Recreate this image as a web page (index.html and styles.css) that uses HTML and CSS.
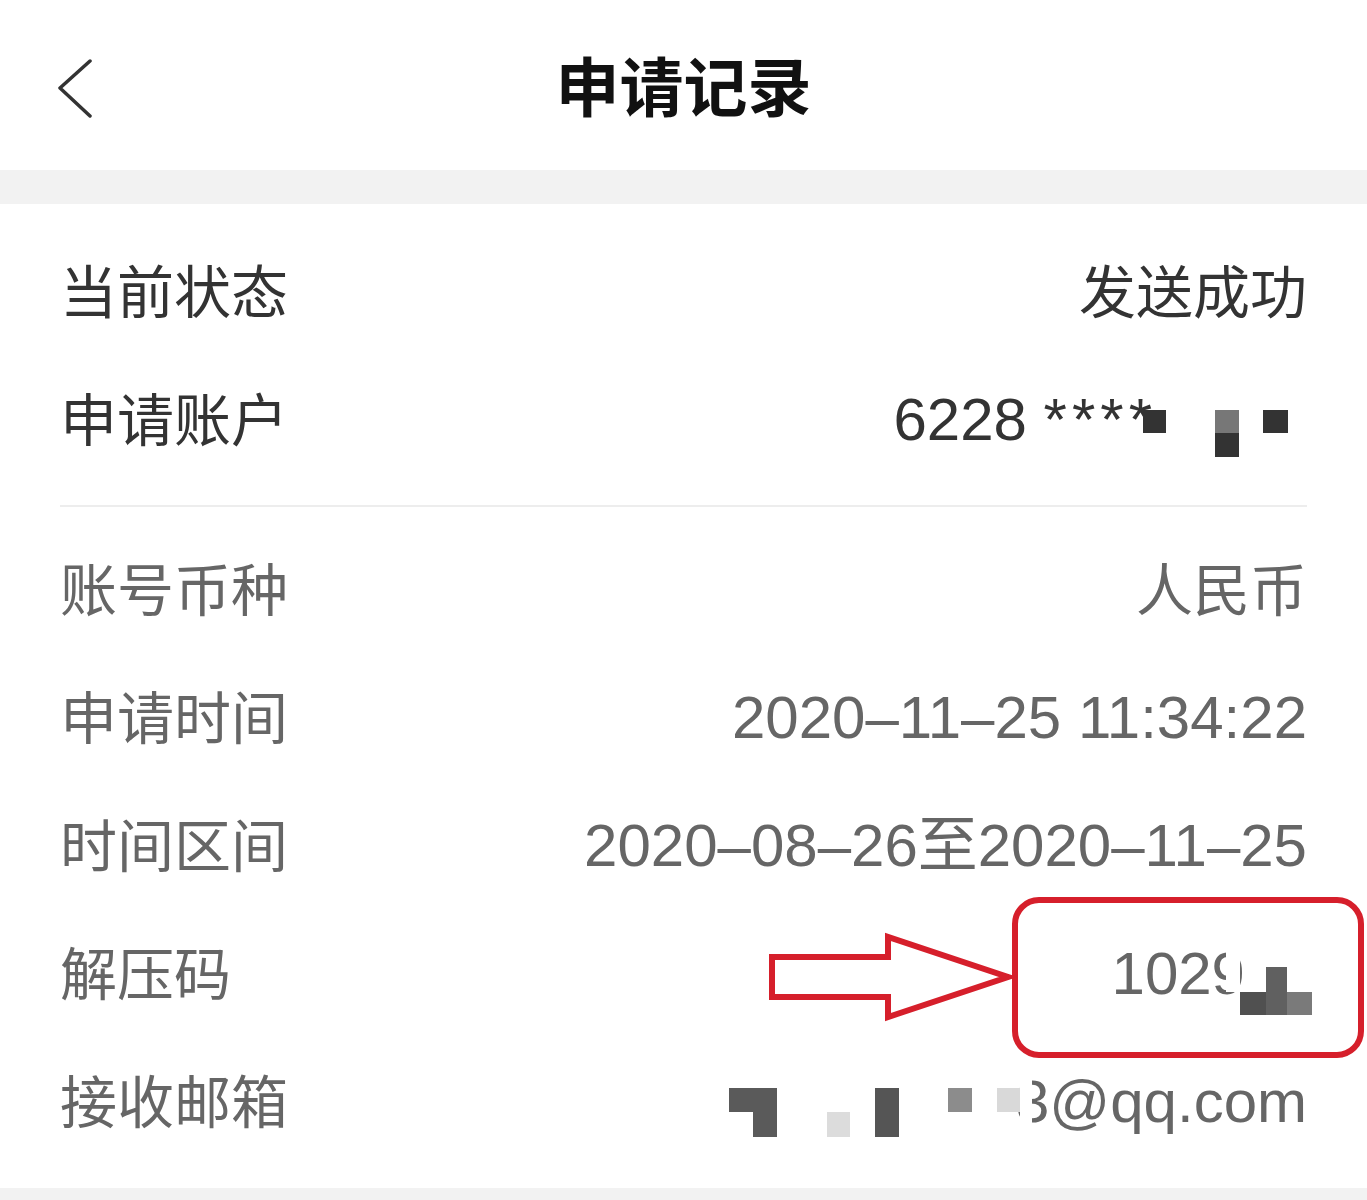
FILE: index.html
```html
<!DOCTYPE html>
<html lang="zh-CN">
<head>
<meta charset="utf-8">
<title>申请记录</title>
<link rel="stylesheet" href="styles.css">
</head>
<body>
<div class="page">
  <header class="header">
    <div class="back">
      <svg class="back-icon" width="36" height="60" viewBox="0 0 36 60"><polyline points="33,2 3,29 33,57" fill="none" stroke="#333" stroke-width="3.5" stroke-linecap="round" stroke-linejoin="round"/></svg>
    </div>
    <h1 class="title">申请记录</h1>
    <div></div>
  </header>
  <div class="band"></div>

  <section class="group group-main">
    <div class="row">
      <span class="label">当前状态</span>
      <span class="value">发送成功</span>
    </div>
    <div class="row">
      <span class="label">申请账户</span>
      <span class="value num">6228 <span class="stars">****</span><span class="mosaic mosaic-account"><i class="m a1"></i><i class="m a2"></i><i class="m a3"></i><i class="m a4"></i></span></span>
    </div>
  </section>
  <div class="divider"></div>

  <section class="group group-detail">
    <div class="row">
      <span class="label">账号币种</span>
      <span class="value">人民币</span>
    </div>
    <div class="row">
      <span class="label">申请时间</span>
      <span class="value num">2020–11–25 11:34:22</span>
    </div>
    <div class="row">
      <span class="label">时间区间</span>
      <span class="value num">2020–08–26至2020–11–25</span>
    </div>
    <div class="row">
      <span class="label">解压码</span>
      <span class="value num">1029<span class="mosaic mosaic-code"><i class="m c0"></i><i class="m c1"></i><i class="m c2"></i><i class="m c3"></i></span></span>
    </div>
    <div class="row">
      <span class="label">接收邮箱</span>
      <span class="value num"><span class="mosaic mosaic-mail"><i class="m e1"></i><i class="m e2"></i><i class="m e3"></i><i class="m e4"></i><i class="m e5"></i><i class="m e6"></i><i class="m e7"></i></span>3@qq.com</span>
    </div>
  </section>
  <div class="bottom-band"></div>

  <svg class="annotation" width="1367" height="1200" viewBox="0 0 1367 1200">
    <rect x="1015" y="900" width="346" height="155" rx="24" ry="24" fill="none" stroke="#d61f2b" stroke-width="6"/>
    <path d="M772,957 L888,957 L888,937 L1008,977 L888,1017 L888,997 L772,997 Z" fill="none" stroke="#d61f2b" stroke-width="6" stroke-linejoin="miter"/>
  </svg>
</div>
</body>
</html>
```

FILE: styles.css
```css
* { box-sizing: border-box; }

body {
  margin: 0;
  background: #fff;
  font-family: "Noto Sans CJK SC", "Noto Sans", sans-serif;
}

.page {
  position: relative;
  width: 1367px;
  height: 1200px;
  overflow: hidden;
  background: #fff;
}

.header {
  height: 170px;
  display: grid;
  grid-template-columns: 1fr auto 1fr;
  align-items: center;
  padding-bottom: 4px;
}

.back {
  display: flex;
  padding-left: 57px;
  padding-top: 12px;
}

.title {
  margin: 0;
  font-size: 64px;
  font-weight: 700;
  line-height: 1;
  color: #111;
}

.band {
  height: 34px;
  background: #f2f2f2;
}

.group {
  padding: 0 60px;
}

.group-main {
  padding-top: 24px;
  color: #333;
}

.group-detail {
  padding-top: 19px;
  padding-bottom: 22px;
  color: #666;
}

.row {
  height: 128px;
  display: flex;
  align-items: center;
  justify-content: space-between;
}

.label {
  font-size: 57px;
  line-height: 1;
  margin-bottom: 8px;
}

.value {
  display: flex;
  align-items: center;
  font-size: 57px;
  line-height: 1;
  white-space: pre;
  margin-bottom: 8px;
}

.num {
  font-family: "Liberation Sans", Arial, "Noto Sans CJK SC", sans-serif;
  font-size: 60px;
  margin-bottom: 0;
}

.stars {
  letter-spacing: 5px;
}

.divider {
  height: 2px;
  margin: 21px 60px 0;
  background: #ededed;
}

.bottom-band {
  height: 14px;
  background: #f2f2f2;
}

/* mosaic (pixelated redaction) */
.mosaic {
  position: relative;
  flex: none;
  height: 80px;
}

.m {
  position: absolute;
  display: block;
}

.mosaic-account {
  width: 145px;
  margin-left: -14px;
  margin-right: 19px;
}
.a1 { left: 0; top: 30px; width: 23px; height: 23px; background: #333; }
.a2 { left: 72px; top: 30px; width: 24px; height: 23px; background: #777; }
.a3 { left: 72px; top: 53px; width: 24px; height: 24px; background: #333; }
.a4 { left: 120px; top: 30px; width: 25px; height: 23px; background: #333; }

.mosaic-code {
  width: 72px;
  margin-left: -5px;
  margin-right: -5px;
}
.c0 { left: -14px; top: 8px; width: 14px; height: 50px; background: #fff; }
.c1 { left: 0; top: 58px; width: 26px; height: 23px; background: #505050; }
.c2 { left: 26px; top: 33px; width: 21px; height: 48px; background: #606060; }
.c3 { left: 47px; top: 58px; width: 25px; height: 23px; background: #7a7a7a; }

.mosaic-mail {
  width: 287px;
}
.e1 { left: 0; top: 26px; width: 48px; height: 24px; background: #5a5a5a; }
.e2 { left: 24px; top: 50px; width: 24px; height: 25px; background: #5a5a5a; }
.e3 { left: 98px; top: 50px; width: 23px; height: 25px; background: #dcdcdc; }
.e4 { left: 146px; top: 26px; width: 24px; height: 49px; background: #555; }
.e5 { left: 219px; top: 26px; width: 24px; height: 24px; background: #8c8c8c; }
.e6 { left: 268px; top: 26px; width: 23px; height: 24px; background: #d9d9d9; }
.e7 { left: 291px; top: 16px; width: 12px; height: 54px; background: #fff; }

.annotation {
  position: absolute;
  left: 0;
  top: 0;
  pointer-events: none;
}
```
